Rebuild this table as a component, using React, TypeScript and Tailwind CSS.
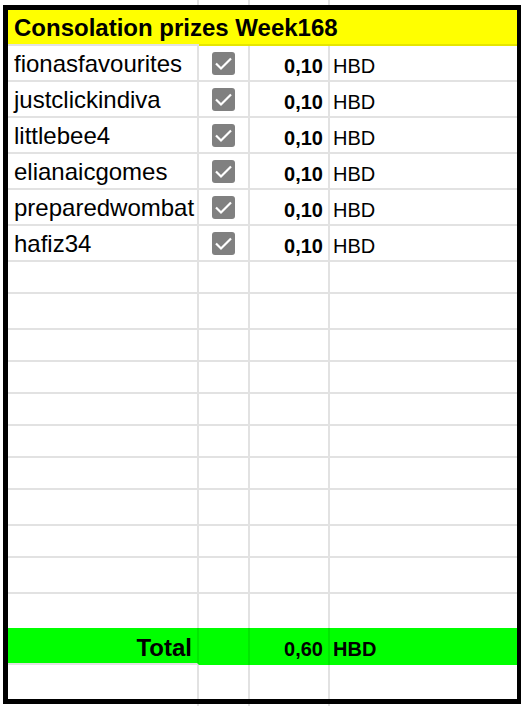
import React from "react";

const winners = [
  { name: "fionasfavourites", amount: "0,10" },
  { name: "justclickindiva", amount: "0,10" },
  { name: "littlebee4", amount: "0,10" },
  { name: "elianaicgomes", amount: "0,10" },
  { name: "preparedwombat", amount: "0,10" },
  { name: "hafiz34", amount: "0,10" },
];

// heights of the blank rows under the list (bottom line included)
const blankRows = [32, 36, 32, 32, 32, 32, 32, 36, 32, 36];

const CheckBox = () => (
  <div className="w-[23px] h-[23px] rounded-[3px] bg-[#808080] flex items-center justify-center">
    <svg width="23" height="23" viewBox="0 0 23 23">
      <polyline
        points="4,11.5 9,16.5 19,6.5"
        fill="none"
        stroke="#ffffff"
        strokeWidth="2.2"
      />
    </svg>
  </div>
);

const GridStrip = () => (
  <div className="flex h-[5px]">
    <div className="w-[199px] border-r-2 border-[#e2e2e2]" />
    <div className="w-[51px] border-r-2 border-[#e2e2e2]" />
    <div className="w-[80px] border-r-2 border-[#e2e2e2]" />
  </div>
);

const BlankRow = ({ h, last }: { h: number; last?: boolean }) => {
  const b = last ? "" : "border-b-2";
  return (
    <div className="flex" style={{ height: h }}>
      <div className={`w-[191px] border-r-2 ${b} border-[#e2e2e2]`} />
      <div className={`w-[51px] border-r-2 ${b} border-[#e2e2e2]`} />
      <div className={`w-[80px] border-r-2 ${b} border-[#e2e2e2]`} />
      <div className={`flex-1 ${b} border-[#e2e2e2]`} />
    </div>
  );
};

export default function App() {
  return (
    <div
      className="w-[522px] h-[706px] bg-white text-black overflow-hidden"
      style={{ fontFamily: '"Liberation Sans", Arial, sans-serif' }}
    >
      <GridStrip />
      <div className="ml-[3px] w-[518px] border-t-[5px] border-b-[5px] border-l-[5px] border-r-[4px] border-black">
        {/* title */}
        <div className="h-[34px] bg-[#ffff00] flex items-end pl-[6px] pb-1 text-[24px] font-bold leading-none whitespace-nowrap">
          Consolation prizes Week168
        </div>
        <div className="flex h-[2px]">
          <div className="w-[191px] bg-[#e2e2e2]" />
          <div className="flex-1 bg-[#e6e600]" />
        </div>

        {winners.map((w) => (
          <div key={w.name} className="flex h-[36px]">
            <div className="w-[191px] border-r-2 border-b-2 border-[#e2e2e2] flex items-end pl-[6px] pb-1 text-[24px] leading-none whitespace-nowrap overflow-hidden">
              {w.name}
            </div>
            <div className="w-[51px] border-r-2 border-b-2 border-[#e2e2e2] flex items-center justify-center">
              <CheckBox />
            </div>
            <div className="w-[80px] border-r-2 border-b-2 border-[#e2e2e2] flex items-end justify-end pr-[5px] pb-1 text-[20px] font-bold leading-none">
              {w.amount}
            </div>
            <div className="flex-1 border-b-2 border-[#e2e2e2] flex items-end pl-[3px] pb-1 text-[20px] leading-none">
              HBD
            </div>
          </div>
        ))}

        {blankRows.map((h, i) => (
          <BlankRow key={i} h={h} />
        ))}
        <BlankRow h={34} last />

        {/* total */}
        <div className="flex h-[37px] bg-[#00ff00]">
          <div className="w-[191px] border-r-2 border-b-2 border-r-[#00e800] border-b-[#e2e2e2] flex items-end justify-end pr-[5px] pb-[3px] text-[24px] font-bold leading-none">
            Total
          </div>
          <div className="w-[51px] border-r-2 border-[#00e800]" />
          <div className="w-[80px] border-r-2 border-[#00e800] flex items-end justify-end pr-[5px] pb-[6px] text-[20px] font-bold leading-none">
            0,60
          </div>
          <div className="flex-1 flex items-end pl-[3px] pb-[6px] text-[20px] font-bold leading-none">
            HBD
          </div>
        </div>

        <BlankRow h={34} last />
      </div>
      <GridStrip />
    </div>
  );
}
